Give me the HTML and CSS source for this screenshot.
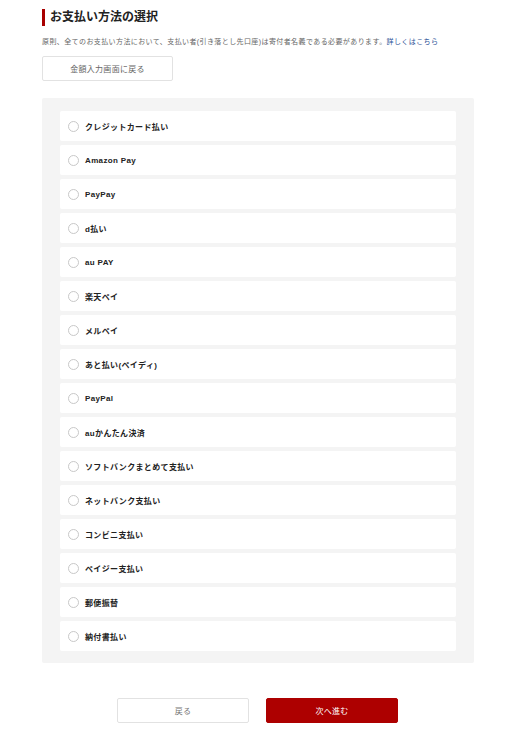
FILE: index.html
```html
<!DOCTYPE html>
<html lang="ja">
<head>
<meta charset="utf-8">
<title>お支払い方法の選択</title>
<link rel="stylesheet" href="styles.css">
</head>
<body>
<main class="page">
  <h1 class="title">お支払い方法の選択</h1>
  <p class="note">原則、全てのお支払い方法において、支払い者(引き落とし先口座)は寄付者名義である必要があります。<a class="link" href="#">詳しくはこちら</a></p>
  <button class="btn btn-back-top" type="button">金額入力画面に戻る</button>

  <section class="panel">
    <label class="item"><span class="radio"></span><span class="label">クレジットカード払い</span></label>
    <label class="item"><span class="radio"></span><span class="label">Amazon Pay</span></label>
    <label class="item"><span class="radio"></span><span class="label">PayPay</span></label>
    <label class="item"><span class="radio"></span><span class="label">d払い</span></label>
    <label class="item"><span class="radio"></span><span class="label">au PAY</span></label>
    <label class="item"><span class="radio"></span><span class="label">楽天ペイ</span></label>
    <label class="item"><span class="radio"></span><span class="label">メルペイ</span></label>
    <label class="item"><span class="radio"></span><span class="label">あと払い(ペイディ)</span></label>
    <label class="item"><span class="radio"></span><span class="label">PayPal</span></label>
    <label class="item"><span class="radio"></span><span class="label">auかんたん決済</span></label>
    <label class="item"><span class="radio"></span><span class="label">ソフトバンクまとめて支払い</span></label>
    <label class="item"><span class="radio"></span><span class="label">ネットバンク支払い</span></label>
    <label class="item"><span class="radio"></span><span class="label">コンビニ支払い</span></label>
    <label class="item"><span class="radio"></span><span class="label">ペイジー支払い</span></label>
    <label class="item"><span class="radio"></span><span class="label">郵便振替</span></label>
    <label class="item"><span class="radio"></span><span class="label">納付書払い</span></label>
  </section>

  <div class="actions">
    <button class="btn btn-back" type="button">戻る</button>
    <button class="btn btn-next" type="button">次へ進む</button>
  </div>
</main>
</body>
</html>
```

FILE: styles.css
```css
* { box-sizing: border-box; }

html, body {
  margin: 0;
  padding: 0;
  background: #fff;
}

body {
  font-family: "Liberation Sans", "Noto Sans CJK JP", sans-serif;
  color: #222;
}

.page {
  width: 432px;
  margin-left: 42px;
  padding-top: 9px;
  display: flex;
  flex-direction: column;
}

.title {
  margin: 0;
  height: 17px;
  line-height: 17px;
  border-left: 3px solid #a80000;
  padding-left: 5px;
  font-size: 12px;
  font-weight: 700;
  color: #222;
}

.note {
  margin: 11px 0 0;
  font-size: 7px;
  line-height: 10px;
  letter-spacing: 0.4px;
  color: #666;
  white-space: nowrap;
}

.link {
  color: #1f4f96;
  text-decoration: none;
}

.btn {
  font-family: "Liberation Sans", "Noto Sans CJK JP", sans-serif;
  height: 25px;
  border-radius: 2px;
  font-size: 8px;
  letter-spacing: 0.3px;
  cursor: pointer;
  padding: 0;
}

.btn-back-top {
  margin-top: 9px;
  width: 131px;
  background: #fff;
  border: 1px solid #e2e2e2;
  color: #666;
  align-self: flex-start;
}

.panel {
  margin-top: 17px;
  background: #f4f4f4;
  border-radius: 2px;
  padding: 13px 18px 12px;
  display: flex;
  flex-direction: column;
  gap: 4px;
}

.item {
  height: 30px;
  background: #fff;
  border-radius: 2px;
  display: flex;
  align-items: center;
  padding-left: 8px;
  gap: 6px;
}

.radio {
  width: 11px;
  height: 11px;
  border: 1px solid #c8c8c8;
  border-radius: 50%;
  background: #fff;
  flex: none;
}

.label {
  font-size: 8px;
  font-weight: 700;
  letter-spacing: 0.35px;
  color: #222;
}

.actions {
  margin-top: 35px;
  display: flex;
  justify-content: center;
  gap: 17px;
  padding-right: 1px;
}

.btn-back {
  width: 132px;
  background: #fff;
  border: 1px solid #e2e2e2;
  color: #777;
}

.btn-next {
  width: 132px;
  background: #ad0000;
  border: 1px solid #ad0000;
  color: #fff;
}
```
